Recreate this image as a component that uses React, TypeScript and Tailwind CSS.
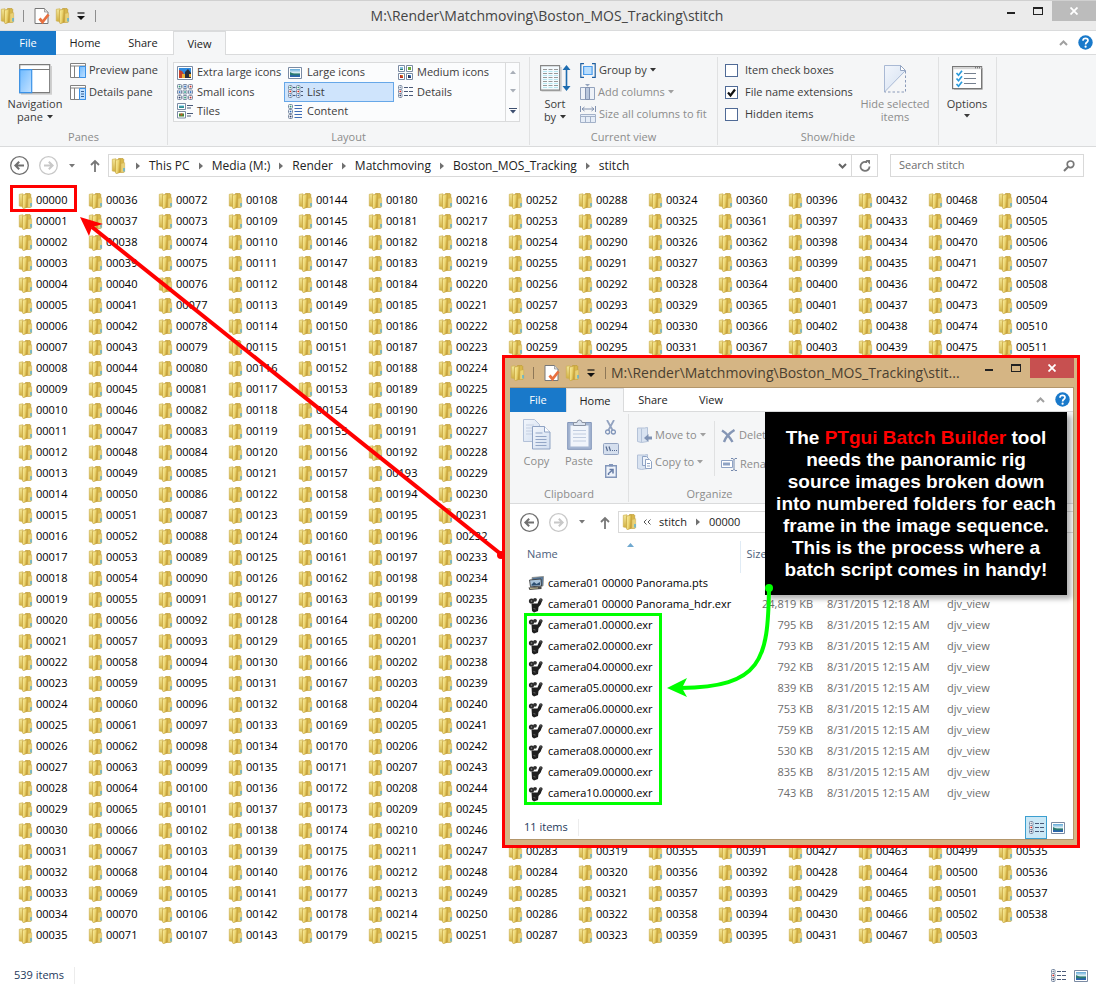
import React from "react";

type IconProps = { className?: string };

const pad = (n: number) => String(n).padStart(5, "0");
const folders = Array.from({ length: 539 }, (_, i) => pad(i));

const files = [
  { name: "camera01 00000 Panorama.pts", size: "", date: "", type: "", kind: "pts" },
  { name: "camera01 00000 Panorama_hdr.exr", size: "24,819 KB", date: "8/31/2015 12:18 AM", type: "djv_view", kind: "exr" },
  { name: "camera01.00000.exr", size: "795 KB", date: "8/31/2015 12:15 AM", type: "djv_view", kind: "exr" },
  { name: "camera02.00000.exr", size: "793 KB", date: "8/31/2015 12:15 AM", type: "djv_view", kind: "exr" },
  { name: "camera04.00000.exr", size: "792 KB", date: "8/31/2015 12:15 AM", type: "djv_view", kind: "exr" },
  { name: "camera05.00000.exr", size: "839 KB", date: "8/31/2015 12:15 AM", type: "djv_view", kind: "exr" },
  { name: "camera06.00000.exr", size: "753 KB", date: "8/31/2015 12:15 AM", type: "djv_view", kind: "exr" },
  { name: "camera07.00000.exr", size: "759 KB", date: "8/31/2015 12:15 AM", type: "djv_view", kind: "exr" },
  { name: "camera08.00000.exr", size: "530 KB", date: "8/31/2015 12:15 AM", type: "djv_view", kind: "exr" },
  { name: "camera09.00000.exr", size: "835 KB", date: "8/31/2015 12:15 AM", type: "djv_view", kind: "exr" },
  { name: "camera10.00000.exr", size: "743 KB", date: "8/31/2015 12:15 AM", type: "djv_view", kind: "exr" },
];

function Gradients() {
  return (
    <svg className="absolute size-0" aria-hidden="true">
      <defs>
        <linearGradient id="folderBack" x1="0" y1="0" x2="0" y2="1">
          <stop offset="0" stopColor="#f3e79a" />
          <stop offset="1" stopColor="#d2b040" />
        </linearGradient>
        <linearGradient id="folderFront" x1="0" y1="0" x2="1" y2="0.4">
          <stop offset="0" stopColor="#fbf0a4" />
          <stop offset="0.6" stopColor="#ecd571" />
          <stop offset="1" stopColor="#c9a437" />
        </linearGradient>
        <linearGradient id="paneBlue" x1="0" y1="0" x2="1" y2="1">
          <stop offset="0" stopColor="#6fbaff" />
          <stop offset="1" stopColor="#c4e2ff" />
        </linearGradient>
        <linearGradient id="photo" x1="0" y1="0" x2="0" y2="1">
          <stop offset="0" stopColor="#5fa8d8" />
          <stop offset="0.5" stopColor="#e9f4f6" />
          <stop offset="0.6" stopColor="#2d7d74" />
          <stop offset="1" stopColor="#2a5b9c" />
        </linearGradient>
        <linearGradient id="fadedBlue" x1="0" y1="0" x2="1" y2="1">
          <stop offset="0" stopColor="#f2f6fc" />
          <stop offset="1" stopColor="#d3dff0" />
        </linearGradient>
      </defs>
    </svg>
  );
}

function Folder({ className = "size-4" }: IconProps) {
  return (
    <svg viewBox="0 0 16 16" className={`shrink-0 ${className}`} aria-hidden="true">
      <path d="M1.300 1.300 5 .8v12.800l-3.700-.6z" fill="url(#folderBack)" stroke="#cdb04d" strokeWidth=".7" />
      <path d="M7.500 .6h4.500l.7.7v13H7.500z" fill="#d9b84a" stroke="#bf9c37" strokeWidth=".7" />
      <path d="M4.500 2.200 9.300.8v13.400l-4 1.500-.8-.9z" fill="url(#folderFront)" stroke="#c6a440" strokeWidth=".7" />
      <path d="M10 5.500l3.700-.8v9.300L10 14.600z" fill="#e9d276" stroke="#c9aa4c" strokeWidth=".4" />
      <path d="M13 10v3.500" stroke="#45aeea" strokeWidth="1.300" />
    </svg>
  );
}

function CheckDoc() {
  return (
    <svg viewBox="0 0 16 18" className="h-[18px] w-4 shrink-0" aria-hidden="true">
      <path d="M1 1.5h9.5L14 5v11.5H1z" fill="#fff" stroke="#777" />
      <path d="M10.5 1.5V5H14" fill="#ddd" stroke="#888" strokeWidth=".7" />
      <path d="M5.5 11.5l3 3.5L14.5 7.5" fill="none" stroke="#e8703f" strokeWidth="2.8" />
    </svg>
  );
}

function QuickMenu() {
  return (
    <svg viewBox="0 0 8 8" className="size-2 shrink-0" aria-hidden="true">
      <path d="M.5 1h7" stroke="#111" strokeWidth="1.2" />
      <path d="M0 4h8L4 8z" fill="#111" />
    </svg>
  );
}

function Caret({ className = "text-[#333]" }: IconProps) {
  return (
    <svg viewBox="0 0 6 4" className={`inline-block h-1 w-1.5 shrink-0 ${className}`} aria-hidden="true">
      <path d="M0 0h6L3 3.6z" fill="currentColor" />
    </svg>
  );
}

function NavPaneIcon() {
  return (
    <svg viewBox="0 0 33 31" className="h-[31px] w-[33px]" aria-hidden="true">
      <path d="M2 30h30.5V2" fill="none" stroke="#cfcfcf" strokeWidth="1.4" />
      <path d="M.7.7h30v28H.7z" fill="#fff" stroke="#7b7b7b" strokeWidth="1.2" />
      <path d="M.7 5.5h30" stroke="#7b7b7b" />
      <path d="M.7 5.7h12v23H.7z" fill="url(#paneBlue)" stroke="#3a92e8" strokeWidth="1.2" />
    </svg>
  );
}

function PaneIcon({ lines }: { lines?: boolean }) {
  return (
    <svg viewBox="0 0 16 15" className="h-[15px] w-4 shrink-0" aria-hidden="true">
      <path d="M.5.5h15v14H.5zM.5 3h15M4.5 3v11.5" fill="#fff" stroke="#808080" />
      <path d="M9.5 3.5h6v11h-6z" fill={lines ? "#bfe0ff" : "url(#paneBlue)"} stroke="#3a92e8" />
      {lines && <path d="M11 6.5h3M11 9h3M11 11.5h3" stroke="#31619a" />}
    </svg>
  );
}

function ExtraLarge() {
  return (
    <svg viewBox="0 0 16 14" className="h-3.5 w-4 shrink-0" aria-hidden="true">
      <path d="M.5.5h15v13H.5z" fill="#fff" stroke="#7b8ba3" />
      <path d="M2 2h12v10H2z" fill="#2f8be0" />
      <path d="M2 4l3 1 2 3v4H2z" fill="#c9422b" />
      <path d="M8 6l3-3 3 4v5H8z" fill="#2b2f3a" />
      <path d="M5 8h3v4H5zM12 8h2v3h-2z" fill="#e9b13a" />
    </svg>
  );
}

function Photo({ className = "h-3 w-3.5" }: IconProps) {
  return (
    <svg viewBox="0 0 14 12" className={`shrink-0 ${className}`} aria-hidden="true">
      <path d="M.5.5h13v11H.5z" fill="#fff" stroke="#7b8ba3" />
      <path d="M2 2h10v8H2z" fill="url(#photo)" />
      <path d="M2 5l4 2 6 .5V10H2z" fill="#2b7a72" />
      <path d="M2 8l5 .5L12 8v2H2z" fill="#2c64ad" />
    </svg>
  );
}

const dotColors = ["#2f9a76", "#2b6cc0", "#c8372d", "#2b6cc0", "#36a08c", "#2b6cc0", "#35406a", "#2f9a76", "#b3332c"];

function SmallIcons() {
  return (
    <svg viewBox="0 0 16 16" className="size-4 shrink-0" aria-hidden="true">
      {dotColors.map((c, i) => {
        const x = (i % 3) * 5.5;
        const y = Math.floor(i / 3) * 5.5;
        return (
          <g key={i}>
            <rect x={x + 0.5} y={y + 0.5} width="4" height="4" rx=".8" fill="#fff" stroke="#7b8ba3" />
            <rect x={x + 1.7} y={y + 1.7} width="1.7" height="1.7" fill={c} />
          </g>
        );
      })}
    </svg>
  );
}

function MediumIcons() {
  return (
    <svg viewBox="0 0 15 15" className="size-[15px] shrink-0" aria-hidden="true">
      <path d="M.5.5h6v6h-6zM8.500 .5h6v6h-6zM.5 8.500h6v6h-6zM8.500 8.500h6v6h-6z" fill="#fff" stroke="#7b8ba3" />
      <path d="M2 3.500h3v1.500H2z" fill="#2b7a72" />
      <path d="M2 2h3v1.500H2z" fill="#7fc0e8" />
      <path d="M10 2h3v3h-3z" fill="#6aa83a" />
      <path d="M2 10h3v3H2z" fill="#b92a20" />
      <path d="M10 10h3v3h-3z" fill="#26325c" />
      <path d="M11.500 10H13v1.500h-1.500z" fill="#4b91d8" />
      <path d="M3.500 10H5v1.500H3.500z" fill="#e0922c" />
    </svg>
  );
}

function ListIcon() {
  return (
    <svg viewBox="0 0 15 13" className="h-[13px] w-[15px] shrink-0" aria-hidden="true">
      {[0, 8].map((x) => (
        <g key={x}>
          {[0, 4, 8].map((y, i) => (
            <g key={y}>
              <rect x={x + 0.5} y={y + 0.5} width="3.500" height="4" rx="1" fill="#fff" stroke="#7b8ba3" />
              <rect x={x + 1.5} y={y + 1.7} width="1.500" height="1.500" fill={["#2f9a76", "#d8241c", "#2b6cc0"][i]} />
              <path d={`M${x + 5} ${y + 2.5}h2.5`} stroke="#4a5a78" strokeWidth="1.100" />
            </g>
          ))}
        </g>
      ))}
    </svg>
  );
}

function DetailsIcon() {
  return (
    <svg viewBox="0 0 15 13" className="h-[13px] w-[15px] shrink-0" aria-hidden="true">
      {[0, 4, 8].map((y, i) => (
        <g key={y}>
          <rect x=".5" y={y + 0.5} width="3.500" height="4" rx="1" fill="#fff" stroke="#7b8ba3" />
          <rect x="1.500" y={y + 1.7} width="1.500" height="1.500" fill={["#7b8ba3", "#d8241c", "#35406a"][i]} />
          <path d={`M6 ${y + 2.5}h4M11 ${y + 2.5}h4`} stroke="#4a5a78" />
        </g>
      ))}
    </svg>
  );
}

function TilesIcon() {
  return (
    <svg viewBox="0 0 16 16" className="size-4 shrink-0" aria-hidden="true">
      <path d="M.5.5h8v6h-8zM.5 8.500h8v6.500h-8z" fill="#fff" stroke="#7b8ba3" />
      <path d="M2 2h5v3H2z" fill="#2f8f94" />
      <path d="M2 2h5v1.200H2z" fill="#a7dcf2" />
      <path d="M2 10.500h5v3H2z" fill="#3c8a35" />
      <path d="M3.500 10.500h2v2h-2z" fill="#d4552a" />
      <path d="M10 2.500h6M10 5h4M10 10.500h6M10 13h4" stroke="#4a5a78" />
    </svg>
  );
}

function ContentIcon() {
  return (
    <svg viewBox="0 0 14 15" className="h-[15px] w-3.5 shrink-0" aria-hidden="true">
      {[0, 5, 10].map((y, i) => (
        <g key={y}>
          <rect x=".5" y={y + 0.5} width="4" height="4" rx="1" fill="#fff" stroke="#7b8ba3" />
          <rect x="1.700" y={y + 1.7} width="1.700" height="1.700" fill={["#2f9a76", "#2b6cc0", "#35406a"][i]} />
        </g>
      ))}
      <path d="M6.500 1.500H14M6.500 4.500H14M6.500 7.500H14M6.500 10.500H14M6.500 13.500H14" stroke="#3f6db5" />
    </svg>
  );
}

function SortIcon() {
  return (
    <svg viewBox="0 0 31 27" className="h-[27px] w-[31px]" aria-hidden="true">
      <path d="M1.500 26h19.500V2" fill="none" stroke="#c4c4c4" strokeWidth="1.200" />
      <path d="M.6.6h19v24.500H.6z" fill="#f4fbff" stroke="#858585" strokeWidth="1.100" />
      <path d="M3 4.500h15M3 8.500h15M3 12.500h15M3 16.500h15M3 20.500h15" stroke="#999" strokeDasharray="4 1.500" />
      <path d="M3 6.500h15M3 10.500h15M3 14.500h15M3 18.500h15M3 22.500h15" stroke="#b5e6ef" strokeDasharray="4 1.500" />
      <path d="M26.500 3v20" stroke="#1d6cb0" strokeWidth="1.600" />
      <path d="M22.500 5l4-5 4 5zM22.500 21l4 5 4-5z" fill="#1d6cb0" />
    </svg>
  );
}

function GroupIcon() {
  return (
    <svg viewBox="0 0 16 15" className="h-[15px] w-4 shrink-0" aria-hidden="true">
      <path d="M4 .7H.8v13.600H4M12 .7h3.200v13.600H12" fill="none" stroke="#1f5fa0" strokeWidth="1.200" />
      <path d="M3.600 3.500h8.500v8H3.600z" fill="#b9defe" stroke="#4a9cec" strokeWidth="1.200" />
    </svg>
  );
}

function AddColIcon() {
  return (
    <svg viewBox="0 0 15 16" className="h-4 w-[15px] shrink-0" aria-hidden="true">
      <path d="M.5 3.500h14v12H.5z" fill="#eef2f8" stroke="#93a3bd" />
      <path d="M5.500 3.500h4v12h-4z" fill="#b9c7dd" stroke="#8292b0" />
      <path d="M5 0h5L7.500 2.500z" fill="#93a3bd" />
    </svg>
  );
}

function SizeColIcon() {
  return (
    <svg viewBox="0 0 16 17" className="h-[17px] w-4 shrink-0" aria-hidden="true">
      <path d="M.5 0v6M15.500 0v6M2 3h12M4.500 1 2 3l2.500 2M11.500 1 14 3l-2.500 2" fill="none" stroke="#8292b0" />
      <path d="M.5 8.500h15v8H.5z" fill="#e6edf7" stroke="#a3b1c8" />
      <path d="M.5 10.500h15M5.500 10v6M10.500 10v6" stroke="#a3b1c8" />
    </svg>
  );
}

function HideIcon() {
  return (
    <svg viewBox="0 0 22 28" className="h-7 w-[22px]" aria-hidden="true">
      <path d="M.5.5h16l5 5L.5 27z" fill="url(#fadedBlue)" stroke="#a9b9d4" />
      <path d="M16.500.5v5h5z" fill="#fff" stroke="#94a5c2" />
      <path d="M21.500 6v21H.5" fill="none" stroke="#8a9ab9" strokeDasharray="2.500 2" />
    </svg>
  );
}

function OptionsIcon() {
  return (
    <svg viewBox="0 0 31 24" className="h-6 w-[31px]" aria-hidden="true">
      <path d="M2 23.500h28.500V2" fill="none" stroke="#c6c6c6" />
      <path d="M.6.6h29v22H.6z" fill="#fff" stroke="#777" strokeWidth="1.200" />
      <path d="M1 1.200h28.400v2H1z" fill="#d5d5d5" />
      <path d="M23 1.800h5" stroke="#555" strokeDasharray="1 1" />
      <path d="M12 7.500h12M12 12.500h12M12 17.500h12" stroke="#75808f" strokeWidth="1.200" />
      <path d="M4.500 7l2 2.200L10 4.800M4.500 12.500l2 2.200 3.500-4.400M4.500 18l2 2.200 3.500-4.400" fill="none" stroke="#2b9bdc" strokeWidth="1.700" />
    </svg>
  );
}

function HelpIcon() {
  return (
    <svg viewBox="0 0 15 15" className="size-[15px]" aria-hidden="true">
      <circle cx="7.500" cy="7.500" r="7.200" fill="#1979ca" />
      <path d="M5 5.700C5 4.200 6 3.300 7.500 3.300s2.500.9 2.500 2.200c0 1.700-2.400 1.800-2.400 3.900" fill="none" stroke="#fff" strokeWidth="1.700" />
      <circle cx="7.600" cy="11.700" r="1.100" fill="#fff" />
    </svg>
  );
}

function ChevronUp() {
  return (
    <svg viewBox="0 0 9 6" className="h-1.5 w-[9px]" aria-hidden="true">
      <path d="M1 5l3.500-3.500L8 5" fill="none" stroke="#a0a0a0" strokeWidth="2" />
    </svg>
  );
}

function RoundArrow({ flip, faded }: { flip?: boolean; faded?: boolean }) {
  const c = faded ? "#c8c8c8" : "#707070";
  return (
    <svg viewBox="0 0 19 19" className="size-[19px]" aria-hidden="true">
      <circle cx="9.500" cy="9.500" r="8.800" fill="#fff" stroke={c} strokeWidth="1.300" />
      <path
        d={flip ? "M5 9.500h8M9.800 5.800l3.800 3.700-3.800 3.700" : "M14 9.500H6M9.200 5.800 5.400 9.500l3.800 3.700"}
        fill="none"
        stroke={c}
        strokeWidth="2"
      />
    </svg>
  );
}

function UpArrow() {
  return (
    <svg viewBox="0 0 10 13" className="h-[13px] w-2.5" aria-hidden="true">
      <path d="M5 13V2M1 6l4-4 4 4" fill="none" stroke="#777" strokeWidth="1.800" />
    </svg>
  );
}

function CrumbArrow() {
  return (
    <svg viewBox="0 0 4 8" className="h-2 w-1 shrink-0" aria-hidden="true">
      <path d="M0 .5v7L4 4z" fill="#707070" />
    </svg>
  );
}

function CameraIcon() {
  return (
    <svg viewBox="0 0 16 16" className="size-4 shrink-0" aria-hidden="true">
      <path d="M3.500 6.500h6l1.500-3.500 2-1.200 1.500 1-1.800 4.700-2.200 2.500-.5 4-4 1.500-2-1.500z" fill="#1f1f1f" />
      <circle cx="3.500" cy="4" r="2.600" fill="#2a2a2a" />
      <circle cx="7" cy="2.800" r="1.900" fill="#303030" />
      <circle cx="12.800" cy="3" r="1.700" fill="#303030" />
      <circle cx="3.500" cy="4" r=".8" fill="#8a8a8a" />
      <path d="M5.500 11.500l2 .6M12.300 2.600l1 .4" stroke="#777" strokeWidth=".8" />
    </svg>
  );
}

function PanoramaIcon() {
  return (
    <svg viewBox="0 0 16 15" className="h-[15px] w-4 shrink-0" aria-hidden="true">
      <path d="M4 1.500 15.500.5 15 10l-10 .5z" fill="#56789c" stroke="#8a8a84" strokeWidth=".8" />
      <path d="M1.500 4 13 3l.5 7-11 .8z" fill="#a9c3d9" stroke="#333" strokeWidth=".8" />
      <path d="M3.500 8.500l2.500-2.500 2.500 2 3.500-2V9L3.500 9.700z" fill="#2d4f70" />
      <path d="M.5 11.500l13-1V13l-12 1z" fill="#4a4a46" />
      <path d="M2 12.500l8-.6" stroke="#d8cfa0" strokeWidth=".8" />
    </svg>
  );
}

function CopyIcon() {
  return (
    <svg viewBox="0 0 28 31" className="h-[31px] w-7" aria-hidden="true">
      <path d="M.5.5h11l5 5v17H.5z" fill="url(#fadedBlue)" stroke="#b3c1d8" />
      <path d="M3 6h8M3 9h8M3 12h8M3 15h8" stroke="#c5d0e2" />
      <path d="M9.500 7.500h12l5.500 5.500v17H9.500z" fill="url(#fadedBlue)" stroke="#8fa3c4" />
      <path d="M21.500 7.500V13H27" fill="#fff" stroke="#8fa3c4" />
      <path d="M12.500 14h7M12.500 17.500h11M12.500 20.500h11M12.500 23.500h11M12.500 26.500h11" stroke="#93a6c6" />
    </svg>
  );
}

function PasteIcon() {
  return (
    <svg viewBox="0 0 25 31" className="h-[31px] w-[25px]" aria-hidden="true">
      <path d="M.7 3.500h23.600v26.800H.7z" fill="#a5b6d2" stroke="#8296ba" />
      <path d="M3.500 6.500h18v21h-18z" fill="#f1f5fb" />
      <path d="M6.500 6.500V3.500h3.500a2.500 2.500 0 0 1 5 0h3.500v3z" fill="#dbe3ef" stroke="#8a93a3" />
      <path d="M6 11.500h13M6 15h13M6 18.500h13M6 22h13" stroke="#c0ccdf" />
    </svg>
  );
}

function CutIcon() {
  return (
    <svg viewBox="0 0 11 15" className="h-[15px] w-[11px]" aria-hidden="true">
      <path d="M2 0l5.500 10M9 0 3.500 10" stroke="#93a3c0" strokeWidth="1.800" />
      <circle cx="2.600" cy="12" r="2" fill="none" stroke="#8296ba" strokeWidth="1.300" />
      <circle cx="8.400" cy="12" r="2" fill="none" stroke="#8296ba" strokeWidth="1.300" />
    </svg>
  );
}

function CopyPathIcon() {
  return (
    <svg viewBox="0 0 16 12" className="h-3 w-4" aria-hidden="true">
      <rect x=".5" y=".5" width="15" height="11" rx="1" fill="#d5dfee" stroke="#93a3c0" />
      <path d="M3 3.500l1.500 4.500M6 3.500l1.500 4.500M9 7.500h1M11 7.500h1M13 7.500h1" stroke="#54698f" strokeWidth="1.200" />
    </svg>
  );
}

function ShortcutIcon() {
  return (
    <svg viewBox="0 0 12 14" className="h-3.5 w-3" aria-hidden="true">
      <path d="M.7 1.700h10.600v11.600H.7z" fill="#eef3fa" stroke="#8296ba" strokeWidth="1.400" />
      <path d="M4 0h4v2.500H4z" fill="#8296ba" />
      <path d="M3.500 11V9.500L7 6.500M4.500 5.500H8v4" fill="none" stroke="#647aa4" strokeWidth="1.500" />
    </svg>
  );
}

function MoveIcon() {
  return (
    <svg viewBox="0 0 15 16" className="h-4 w-[15px] shrink-0" aria-hidden="true">
      <path d="M.5 1h7l3-.5v14l-6 1-4-1z" fill="#d9e3f1" stroke="#b4c2d8" />
      <path d="M4.500 1.500v14" stroke="#b4c2d8" />
      <path d="M7 11l4.500-4v2.500H15v3h-3.500V15z" fill="#7f92b4" />
    </svg>
  );
}

function CopyToIcon() {
  return (
    <svg viewBox="0 0 15 16" className="h-4 w-[15px] shrink-0" aria-hidden="true">
      <path d="M.5 1h7l3-.5v14l-6 1-4-1z" fill="#d9e3f1" stroke="#b4c2d8" />
      <path d="M5.500 2.500h4l2 2v7h-6z" fill="#eef3fa" stroke="#8fa3c4" />
      <path d="M8.500 5.500h4l2 2v7h-6z" fill="#fff" stroke="#8fa3c4" />
      <path d="M10 9.500h3M10 12h3" stroke="#8fa3c4" />
    </svg>
  );
}

function DeleteIcon() {
  return (
    <svg viewBox="0 0 15 14" className="h-3.5 w-[15px] shrink-0" aria-hidden="true">
      <path d="M1 1.500c4 2.500 8 7 10.500 11.500M13.500 1C8.500 4 4.500 8.500 3 13" fill="none" stroke="#8596b5" strokeWidth="2.400" />
    </svg>
  );
}

function RenameIcon() {
  return (
    <svg viewBox="0 0 16 13" className="h-[13px] w-4 shrink-0" aria-hidden="true">
      <path d="M.5 2.500h11v7H.5z" fill="#fff" stroke="#8fa3c4" />
      <path d="M2 4.500h7v3H2z" fill="#8fa3c4" />
      <path d="M10 .5h2l1 1 1-1h2M10 12.500h2l1-1 1 1h2M13 1v11" fill="none" stroke="#7589ad" />
    </svg>
  );
}

function Divider({ className = "bg-[#8e8e8e]" }: IconProps) {
  return <span className={`h-3 w-px shrink-0 ${className}`} />;
}

function WindowButtons({ closeClass }: { closeClass: string }) {
  return (
    <div className="flex items-start">
      <button aria-label="Minimize" className="flex h-5 w-[26px] items-center justify-center">
        <span className="mt-1 h-0.5 w-2 bg-[#222]" />
      </button>
      <button aria-label="Maximize" className="flex h-5 w-7 items-center justify-center">
        <span className="h-2 w-2.5 border border-t-2 border-[#222]" />
      </button>
      <button aria-label="Close" className={`flex h-5 w-11 items-center justify-center ${closeClass}`}>
        <svg viewBox="0 0 8 8" className="size-2" aria-hidden="true">
          <path d="M.5.5l7 7M7.500.5l-7 7" stroke="#fff" strokeWidth="1.800" />
        </svg>
      </button>
    </div>
  );
}

function Tabs({ active }: { active: string }) {
  return (
    <div className="flex h-6 shrink-0 items-stretch bg-white text-[11px]">
      <button className="w-14 bg-[#1979ca] text-white">File</button>
      <div className="flex grow border-b border-[#dadbdc]">
        {["Home", "Share", "View"].map((t) => (
          <button
            key={t}
            className={
              t === active
                ? t === "View"
                  ? "-mb-px ml-px w-[53px] border border-b-0 border-[#dadbdc] bg-[#f5f6f7] pt-px"
                  : "-mb-px w-[58px] border border-b-0 border-[#dadbdc] bg-[#f5f6f7] pt-px"
                : "w-[58px] pt-0.5"
            }
          >
            {t}
          </button>
        ))}
      </div>
      <div className="flex items-center gap-2.5 border-b border-[#dadbdc] pr-[3px]">
        <button aria-label="Minimize the ribbon">
          <ChevronUp />
        </button>
        <button aria-label="Help">
          <HelpIcon />
        </button>
      </div>
    </div>
  );
}

function Group({ label, className, children }: { label: string; className: string; children: React.ReactNode }) {
  return (
    <section className={`mt-0.5 mb-px flex shrink-0 flex-col border-r border-[#e0e1e2] ${className}`}>
      <div className="flex grow">{children}</div>
      <h2 className="h-4 text-center leading-4 text-[#8c8c8c]">{label}</h2>
    </section>
  );
}

const gallery = [
  { label: "Extra large icons", icon: <ExtraLarge /> },
  { label: "Large icons", icon: <Photo /> },
  { label: "Medium icons", icon: <MediumIcons /> },
  { label: "Small icons", icon: <SmallIcons /> },
  { label: "List", icon: <ListIcon />, on: true },
  { label: "Details", icon: <DetailsIcon /> },
  { label: "Tiles", icon: <TilesIcon /> },
  { label: "Content", icon: <ContentIcon /> },
];

function CheckRow({ label, checked }: { label: string; checked?: boolean }) {
  return (
    <label className="relative flex h-[22px] items-center gap-[7px]">
      <input
        type="checkbox"
        defaultChecked={checked}
        className="peer size-[13px] shrink-0 appearance-none border border-[#4f6a96] bg-white"
      />
      <svg viewBox="0 0 13 13" className="pointer-events-none absolute left-0 hidden size-[13px] peer-checked:block" aria-hidden="true">
        <path d="M3 6.500l2.500 3L10 3.500" fill="none" stroke="#111" strokeWidth="2.200" />
      </svg>
      {label}
    </label>
  );
}

function ViewRibbon() {
  return (
    <div className="flex h-[92px] shrink-0 overflow-hidden border-b border-[#dadbdc] bg-[#f5f6f7] text-[11px] text-[#3b3b3b]">
      <Group label="Panes" className="w-[168px]">
        <button className="flex w-[70px] flex-col items-center pt-[7px] leading-[13px]">
          <NavPaneIcon />
          <span className="mt-0.5">Navigation</span>
          <span className="flex items-center gap-1">
            pane <Caret />
          </span>
        </button>
        <div className="flex flex-col pt-0.5">
          <button className="flex h-[22px] items-center gap-[3px]">
            <PaneIcon /> Preview pane
          </button>
          <button className="flex h-[22px] items-center gap-[3px]">
            <PaneIcon lines /> Details pane
          </button>
        </div>
      </Group>
      <Group label="Layout" className="w-[362px]">
        <div className="mt-[5px] ml-[5px] flex h-[60px] w-[347px] border border-[#dadbdc] bg-[#fbfcfd]">
          <div className="grid grow grid-cols-[110px_110px_1fr] grid-rows-3">
            {gallery.map((g) => (
              <button
                key={g.label}
                className={
                  g.on
                    ? "flex items-center gap-1 border border-[#66a7e8] bg-[#cfe4fc] px-0.5 whitespace-nowrap"
                    : "flex items-center gap-1 px-[3px] whitespace-nowrap"
                }
              >
                <span className="flex w-4 shrink-0 justify-center">{g.icon}</span>
                {g.label}
              </button>
            ))}
          </div>
          <div className="flex w-3.5 flex-col border-l border-[#dadbdc]">
            <button aria-label="Scroll up" className="flex grow items-center justify-center">
              <Caret className="rotate-180 text-[#a9afb8]" />
            </button>
            <button aria-label="Scroll down" className="flex grow items-center justify-center">
              <Caret className="text-[#a9afb8]" />
            </button>
            <button aria-label="More layouts" className="flex grow flex-col items-center justify-center gap-px">
              <span className="h-px w-2 bg-[#3d4f70]" />
              <Caret className="text-[#3d4f70]" />
            </button>
          </div>
        </div>
      </Group>
      <Group label="Current view" className="w-[188px]">
        <button className="flex w-[50px] flex-col items-center pt-2 leading-[13px]">
          <SortIcon />
          <span className="mt-[5px]">Sort</span>
          <span className="flex items-center gap-1">
            by <Caret />
          </span>
        </button>
        <div className="flex flex-col pt-0.5">
          <button className="flex h-[22px] items-center gap-[3px]">
            <GroupIcon /> Group by <Caret />
          </button>
          <button className="flex h-[22px] items-center gap-[3px] text-[#8c8c8c]">
            <AddColIcon /> Add columns <Caret className="text-[#a0a0a0]" />
          </button>
          <button className="flex h-[22px] items-center gap-[3px] text-[#8c8c8c]">
            <SizeColIcon /> Size all columns to fit
          </button>
        </div>
      </Group>
      <Group label="Show/hide" className="w-[221px]">
        <div className="flex w-[142px] flex-col pt-0.5 pl-[7px]">
          <CheckRow label="Item check boxes" />
          <CheckRow label="File name extensions" checked />
          <CheckRow label="Hidden items" />
        </div>
        <button className="flex w-[70px] flex-col items-center pt-2 leading-[13px] text-[#8c8c8c]">
          <HideIcon />
          <span className="mt-1 whitespace-nowrap">Hide selected</span>
          <span>items</span>
        </button>
      </Group>
      <div className="my-0.5 flex w-[58px] shrink-0 justify-center border-r border-[#e0e1e2] pr-px">
        <button className="flex flex-col items-center pt-[9px] leading-[13px]">
          <OptionsIcon />
          <span className="mt-[7px]">Options</span>
          <Caret className="mt-1" />
        </button>
      </div>
    </div>
  );
}

function NavButtons() {
  return (
    <>
      <button aria-label="Back" className="ml-2.5">
        <RoundArrow />
      </button>
      <button aria-label="Forward" className="ml-2.5">
        <RoundArrow flip faded />
      </button>
      <button aria-label="Recent locations" className="ml-[11px] flex">
        <Caret className="text-[#777]" />
      </button>
      <button aria-label="Up" className="ml-[15px]">
        <UpArrow />
      </button>
    </>
  );
}

function MainAddress() {
  return (
    <nav className="flex h-[37px] shrink-0 items-center text-[11px]">
      <NavButtons />
      <div className="ml-2 flex h-[23px] grow items-center border border-[#d9d9d9] pl-0.5 text-xs">
        <Folder />
        {["This PC", "Media (M:)", "Render", "Matchmoving", "Boston_MOS_Tracking", "stitch"].map((c) => (
          <React.Fragment key={c}>
            <span className="ml-[9px] flex">
              <CrumbArrow />
            </span>
            <button className="ml-[9px]">{c}</button>
          </React.Fragment>
        ))}
        <span className="grow" />
        <button aria-label="Previous locations" className="mr-1">
          <svg viewBox="0 0 9 6" className="h-1.5 w-[9px] rotate-180" aria-hidden="true">
            <path d="M1 5l3.500-3.500L8 5" fill="none" stroke="#666" strokeWidth="2" />
          </svg>
        </button>
        <button aria-label="Refresh" className="flex h-full w-[26px] items-center justify-center border-l border-[#d9d9d9]">
          <svg viewBox="0 0 12 12" className="size-3" aria-hidden="true">
            <path d="M10.500 6.500A4.500 4.500 0 1 1 6.500 2H8" fill="none" stroke="#777" strokeWidth="1.800" />
            <path d="M6.500 0h4.500v4.500z" fill="#777" />
          </svg>
        </button>
      </div>
      <div className="mr-3 ml-3 flex h-[23px] w-[194px] items-center border border-[#d9d9d9] pr-2 pl-2">
        <input aria-label="Search stitch" placeholder="Search stitch" className="min-w-0 grow outline-none placeholder:text-[#6d6d6d]" />
        <svg viewBox="0 0 12 12" className="size-3 shrink-0" aria-hidden="true">
          <circle cx="7.500" cy="4.300" r="3.300" fill="none" stroke="#777" strokeWidth="1.700" />
          <path d="M5.200 6.700 1 11" stroke="#777" strokeWidth="2" />
        </svg>
      </div>
    </nav>
  );
}

function InsetRibbon() {
  return (
    <div className="flex h-[92px] shrink-0 overflow-hidden border-b border-[#dadbdc] bg-[#f5f6f7] text-[11px] text-[#8c8c8c]">
      <Group label="Clipboard" className="w-[119px]">
        <button className="flex w-[53px] flex-col items-center pt-[5px]">
          <CopyIcon />
          <span className="mt-[3px] leading-4">Copy</span>
        </button>
        <button className="flex w-8 flex-col items-center pt-[5px]">
          <PasteIcon />
          <span className="mt-[3px] leading-4">Paste</span>
        </button>
        <div className="flex w-[31px] flex-col items-center pt-0.5">
          <button aria-label="Cut" className="flex h-[22px] items-center"><CutIcon /></button>
          <button aria-label="Copy path" className="flex h-[22px] items-center"><CopyPathIcon /></button>
          <button aria-label="Paste shortcut" className="flex h-[22px] items-center"><ShortcutIcon /></button>
        </div>
      </Group>
      <Group label="Organize" className="w-[162px]">
        <div className="mt-[7px] ml-2 flex h-[55px] w-[78px] flex-col border-r border-[#e0e1e2]">
          <button className="flex h-[29px] items-center gap-[3px]">
            <MoveIcon /> Move to <Caret className="text-[#a0a0a0]" />
          </button>
          <button className="flex h-[29px] items-center gap-[3px]">
            <CopyToIcon /> Copy to <Caret className="text-[#a0a0a0]" />
          </button>
        </div>
        <div className="mt-[7px] ml-1.5 flex flex-col">
          <button className="flex h-[29px] items-center gap-[3px]">
            <DeleteIcon /> Delete
          </button>
          <button className="flex h-[29px] items-center gap-[3px]">
            <RenameIcon /> Rename
          </button>
        </div>
      </Group>
    </div>
  );
}

function InsetWindow() {
  return (
    <section className="absolute top-[355px] left-[502px] flex h-[493px] w-[578px] flex-col border-3 border-[#ff0000] bg-[#d5b584] pr-[3px] pb-[5px] pl-[5px]">
      <header className="flex h-[30px] shrink-0 items-start border-b border-[#b3966b]">
        <div className="flex h-[29px] min-w-0 grow items-center">
          <Folder className="size-4" />
          <Divider className="ml-[7px] bg-[#8d7757]" />
          <span className="ml-2.5 flex"><CheckDoc /></span>
          <Folder className="ml-[5px] size-4" />
          <button aria-label="Customize quick access" className="ml-1.5"><QuickMenu /></button>
          <Divider className="ml-2.5 bg-[#8d7757]" />
          <h1 className="ml-[5px] text-sm whitespace-nowrap text-[#4a3f30]">M:\Render\Matchmoving\Boston_MOS_Tracking\stit...</h1>
        </div>
        <WindowButtons closeClass="bg-[#c75050]" />
      </header>
      <div className="flex min-h-0 grow flex-col border-r border-b border-[#b3966b] bg-white">
        <Tabs active="Home" />
        <InsetRibbon />
        <nav className="flex h-9 shrink-0 items-center text-[11px]">
          <NavButtons />
          <div className="ml-2 flex h-[22px] grow items-center border-y border-l border-[#d9d9d9] pl-[3px]">
            <Folder />
            <svg viewBox="0 0 8 6" className="ml-[5px] h-1.5 w-2" aria-hidden="true">
              <path d="M3.500.5 1 3l2.500 2.500M7.500.5 5 3l2.500 2.500" fill="none" stroke="#555" />
            </svg>
            <button className="ml-2">stitch</button>
            <span className="mx-[9px] flex"><CrumbArrow /></span>
            <button>00000</button>
          </div>
        </nav>
        <table className="mt-px w-full table-fixed border-collapse text-[11px]">
          <colgroup>
            <col className="w-[230px]" />
            <col className="w-[73px]" />
            <col className="w-[122px]" />
            <col />
          </colgroup>
          <thead>
            <tr className="h-8 text-left align-middle text-[#4c607a]">
              <th className="relative border-r border-[#e0ebf5] pb-1.5 pl-[17px] font-normal">
                Name
                <svg viewBox="0 0 7 4" className="absolute top-0.5 left-[117px] h-1 w-[7px]" aria-hidden="true">
                  <path d="M0 4 3.500 0 7 4z" fill="#6fa8cf" />
                </svg>
              </th>
              <th className="pb-1.5 pl-1.5 font-normal">Size</th>
              <th className="pb-1.5 pl-3.5 font-normal">Date</th>
              <th className="pb-1.5 pl-3 font-normal">Type</th>
            </tr>
          </thead>
          <tbody>
            {files.map((f) => (
              <tr key={f.name} className="h-[21px] text-[#6d6d6d]">
                <td className="p-0 pl-[18px] text-black">
                  <span className="flex h-[21px] items-center gap-1 whitespace-nowrap">
                    {f.kind === "pts" ? <PanoramaIcon /> : <CameraIcon />}
                    {f.name}
                  </span>
                </td>
                <td className="p-0 text-right whitespace-nowrap">{f.size}</td>
                <td className="p-0 pl-3.5 whitespace-nowrap">{f.date}</td>
                <td className="p-0 pl-3 whitespace-nowrap">{f.type}</td>
              </tr>
            ))}
          </tbody>
        </table>
        <footer className="mt-auto flex h-[23px] items-center pr-2 pl-3.5 text-[11px] text-[#1e395b]">
          <span className="border-r border-[#ececec] pr-2.5">11 items</span>
          <span className="grow" />
          <button aria-label="Details view" className="flex h-[23px] w-[22px] items-center justify-center border border-[#3c9fd0] bg-[#cbe8f6]">
            <DetailsIcon />
          </button>
          <button aria-label="Thumbnail view" className="ml-1">
            <Photo />
          </button>
        </footer>
      </div>
    </section>
  );
}

export default function App() {
  return (
    <main className="relative flex min-h-screen flex-col overflow-hidden bg-white font-['Open_Sans','Noto_Sans',sans-serif] text-[#222]">
      <Gradients />
      <header className="relative flex h-[31px] shrink-0 items-start border-t border-b border-t-[#d0d0d0] border-b-[#dadbdc] bg-[#ebebeb]">
        <div className="flex h-[29px] items-center">
          <Folder className="size-4" />
          <Divider className="ml-[7px] bg-[#8e8e8e]" />
          <span className="ml-2.5 flex"><CheckDoc /></span>
          <Folder className="ml-[5px] size-4" />
          <button aria-label="Customize quick access" className="ml-1.5"><QuickMenu /></button>
          <Divider className="ml-2.5 bg-[#8e8e8e]" />
        </div>
        <h1 className="grow text-center text-sm leading-[29px] text-[#444]">M:\Render\Matchmoving\Boston_MOS_Tracking\stitch</h1>
        <WindowButtons closeClass="bg-[#bcbcbc]" />
      </header>
      <Tabs active="View" />
      <ViewRibbon />
      <MainAddress />
      <ul className="mt-1.5 grid grow auto-cols-[70px] grid-flow-col grid-rows-[repeat(36,21px)] pl-[18px] text-[11px] text-black">
        {folders.map((f) => (
          <li key={f} className="flex items-center gap-0.5">
            <Folder /> {f}
          </li>
        ))}
      </ul>
      <footer className="flex h-[23px] shrink-0 items-center pr-2 pl-3.5 text-[11px] text-[#1e395b]">
        <span className="border-r border-[#ececec] pr-2.5">539 items</span>
        <span className="grow" />
        <button aria-label="Details view"><DetailsIcon /></button>
        <button aria-label="Thumbnail view" className="ml-2"><Photo /></button>
      </footer>

      <InsetWindow />

      <div className="absolute top-[185px] left-2.5 h-[27px] w-[67px] border-3 border-[#ff0000]" />
      <div className="absolute top-[613px] left-[524px] h-48 w-[138px] border-3 border-[#00ff00]" />
      <p className="absolute top-[412px] left-[765px] h-[183px] w-[302px] bg-black pt-[15px] text-center font-['Liberation_Sans',Arial,sans-serif] text-[19px] leading-[22px] font-bold text-white shadow-[4px_4px_5px_rgba(0,0,0,0.3)]">
        The <span className="text-[#ff0000]">PTgui Batch Builder</span> tool
        <br />
        needs the panoramic rig
        <br />
        source images broken down
        <br />
        into numbered folders for each
        <br />
        frame in the image sequence.
        <br />
        This is the process where a
        <br />
        batch script comes in handy!
      </p>
      <svg viewBox="0 0 1096 987" className="pointer-events-none absolute top-0 left-0 h-[987px] w-[1096px]" aria-hidden="true">
        <path d="M92 227 502 555" stroke="#ff0000" strokeWidth="4" />
        <path d="M80 217l23 7-11 3-3 9z" fill="#ff0000" />
        <circle cx="501" cy="555" r="4" fill="#ff0000" />
        <path d="M769 588C768 660 762 687 680 688" fill="none" stroke="#00ff00" strokeWidth="4" />
        <path d="M667 688l20-10-5 10 5 9z" fill="#00ff00" />
        <circle cx="769" cy="588" r="4" fill="#00ff00" />
      </svg>
    </main>
  );
}
